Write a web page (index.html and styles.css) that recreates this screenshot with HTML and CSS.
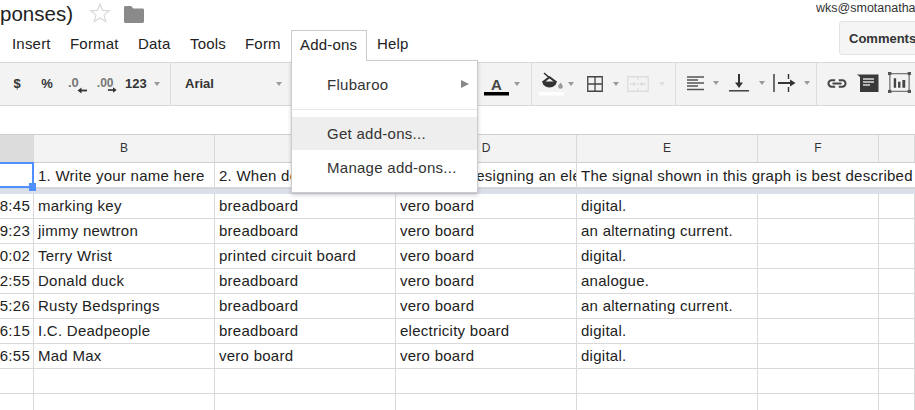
FILE: index.html
```html
<!DOCTYPE html>
<html lang="en">
<head>
<meta charset="utf-8">
<title>Responses</title>
<link rel="stylesheet" href="styles.css">
</head>
<body>
<div class="page">
  <header class="top">
    <div class="top-left">
      <div class="title-row">
        <div class="title"><span>(Form Responses)</span></div>
        <svg class="star" width="22" height="22" viewBox="0 0 22 22"><path d="M11 2l2.500 6.400 6.800.4-5.300 4.300 1.800 6.600L11 16l-5.800 3.700L7 13.100 1.700 8.800l6.800-.4z" fill="#fff" stroke="#d8d8d8" stroke-width="1.200"/></svg>
        <svg class="folder" width="20" height="17" viewBox="0 0 20 17"><path d="M0 1.500C0 .7.6 0 1.400 0h5.800l2 2.600h9.400c.8 0 1.400.6 1.400 1.400v11.600c0 .8-.6 1.400-1.400 1.400H1.400C.6 17 0 16.400 0 15.600z" fill="#8a8a8a"/></svg>
      </div>
      <nav class="menu">
        <span class="m m-insert">Insert</span>
        <span class="m m-format">Format</span>
        <span class="m m-data">Data</span>
        <span class="m m-tools">Tools</span>
        <span class="m m-form">Form</span>
        <span class="m m-addons">Add-ons</span>
        <span class="m m-help">Help</span>
      </nav>
    </div>
    <div class="top-right">
      <div class="email">wks@smotanatha.org</div>
      <div class="comments">Comments</div>
    </div>
  </header>

  <div class="toolbar">
    <div class="grp g1">
      <span class="t cell">$</span>
      <span class="t cell">%</span>
      <span class="cell"><svg width="22" height="24" viewBox="0 0 22 24"><text x="2" y="15" class="st">.0</text><path d="M14 18.500h7" stroke="#333" stroke-width="1.800"/><path d="M15.500 15.500l-4 3 4 3z" fill="#333"/></svg></span>
      <span class="cell"><svg width="26" height="24" viewBox="0 0 26 24"><text x="2" y="15" class="st">.00</text><path d="M14 18.500h6" stroke="#333" stroke-width="1.800"/><path d="M19.500 15.500l4 3-4 3z" fill="#333"/></svg></span>
      <span class="t num">123</span>
      <i class="caret c-num"></i>
    </div>
    <div class="grp g2">
      <span class="t font">Arial</span>
      <i class="caret c-font"></i>
      <svg class="tc" width="25" height="24" viewBox="0 0 25 24"><text x="12.500" y="18" text-anchor="middle" class="tca">A</text><rect x="0" y="20" width="25" height="3.500" fill="#000"/></svg>
      <i class="caret c-tc"></i>
    </div>
    <div class="grp g3">
      <svg class="fill" width="25" height="24" viewBox="0 0 25 24"><path d="M5 1l8 7" stroke="#333" stroke-width="1.600"/><path d="M3 9.500L10.500 4 18 9.500 16.500 13Q10.500 18 4.500 13z" fill="#333"/><path d="M6.500 9.500h8L10.500 6.500z" fill="#f3f3f3"/><path d="M21.500 10.500c1.200 1.800 2.300 2.800 2.300 4a2.300 2.300 0 0 1-4.600 0c0-1.200 1.100-2.200 2.300-4z" fill="#999"/><rect y="20" width="25" height="3.500" fill="#fff"/></svg>
      <i class="caret c-fill"></i>
      <svg class="borders" width="16" height="16" viewBox="0 0 16 16"><path d="M.75.75h14.500v14.500H.75zM8 .75v14.500M.75 8h14.500" fill="none" stroke="#444" stroke-width="1.300"/></svg>
      <i class="caret c-bord"></i>
      <svg class="merge" width="22" height="16" viewBox="0 0 22 16"><path d="M.75.75h20.500v14.500H.75zM11 1v3M11 6.500v3M11 12v3M3 8h6M13 8h6" fill="none" stroke="#ddd" stroke-width="1.300"/><path d="M6.500 5.500L9.500 8l-3 2.500zM15.500 5.500L12.500 8l3 2.500z" fill="#ddd"/></svg>
      <i class="caret c-merge"></i>
    </div>
    <div class="grp g4">
      <svg class="align" width="18" height="15" viewBox="0 0 18 15"><path d="M0 1h17M0 4h11M0 7h17M0 10h11M0 13.500h17" stroke="#555" stroke-width="1.400"/></svg>
      <i class="caret c-al"></i>
      <svg class="valign" width="20" height="18" viewBox="0 0 20 18"><path d="M0 16.800h20" stroke="#333" stroke-width="1.400"/><path d="M10 0v10" stroke="#333" stroke-width="2"/><path d="M6 8.500h8L10 14z" fill="#333"/></svg>
      <i class="caret c-va"></i>
      <svg class="wrap" width="23" height="18" viewBox="0 0 23 18"><path d="M1 0v18" stroke="#333" stroke-width="1.400"/><path d="M15.500 0v5M15.500 13v5" stroke="#333" stroke-width="1.400"/><path d="M5 9h13" stroke="#333" stroke-width="2"/><path d="M17 5.500L22.500 9 17 12.500z" fill="#333"/></svg>
      <i class="caret c-wr"></i>
    </div>
    <div class="grp g5">
      <svg class="link" width="22" height="9" viewBox="0 0 22 10"><path d="M9 1.500H5a3.500 3.500 0 0 0 0 7h4M13 1.500h4a3.500 3.500 0 0 1 0 7h-4M6 5h10" fill="none" stroke="#444" stroke-width="2.200"/></svg>
      <svg class="note" width="22" height="18" viewBox="0 0 22 18"><path d="M0 .5h21.500V18H3V3z" fill="#3a3a3a"/><path d="M6 5h11M6 8h11M6 11h7" stroke="#ddd" stroke-width="1.400"/></svg>
      <svg class="chart" width="23" height="21" viewBox="0 0 24 24" preserveAspectRatio="none"><rect x="2" y="2" width="20" height="20" fill="none" stroke="#444"/><path d="M6 18V7h2.500v11zM10.500 18v-7H13v7zM15 18v-9h3v9z" fill="#444"/><rect width="3.500" height="3.500" fill="#555"/><rect x="20.500" width="3.500" height="3.500" fill="#555"/><rect y="20.500" width="3.500" height="3.500" fill="#555"/><rect x="20.500" y="20.500" width="3.500" height="3.500" fill="#555"/></svg>
    </div>
  </div>

  <div class="formula"></div>

  <div class="sheet">
    <div class="row head">
      <div class="c sel"></div><div class="c">B</div><div class="c">C</div><div class="c">D</div><div class="c">E</div><div class="c">F</div><div class="c"></div>
    </div>
    <div class="row first">
      <div class="c ts"></div><div class="c">1. Write your name here</div><div class="c">2. When designing a circuit</div><div class="c"><span>3. Before designing an electronic circuit</span></div><div class="c wide">The signal shown in this graph is best described as</div>
    </div>
    <div class="frozen"></div>
    <div class="row"><div class="c ts"><span>18:45</span></div><div class="c">marking key</div><div class="c">breadboard</div><div class="c">vero board</div><div class="c">digital.</div><div class="c"></div><div class="c"></div></div>
    <div class="row"><div class="c ts"><span>19:23</span></div><div class="c">jimmy newtron</div><div class="c">breadboard</div><div class="c">vero board</div><div class="c">an alternating current.</div><div class="c"></div><div class="c"></div></div>
    <div class="row"><div class="c ts"><span>10:02</span></div><div class="c">Terry Wrist</div><div class="c">printed circuit board</div><div class="c">vero board</div><div class="c">digital.</div><div class="c"></div><div class="c"></div></div>
    <div class="row"><div class="c ts"><span>12:55</span></div><div class="c">Donald duck</div><div class="c">breadboard</div><div class="c">vero board</div><div class="c">analogue.</div><div class="c"></div><div class="c"></div></div>
    <div class="row"><div class="c ts"><span>15:26</span></div><div class="c">Rusty Bedsprings</div><div class="c">breadboard</div><div class="c">vero board</div><div class="c">an alternating current.</div><div class="c"></div><div class="c"></div></div>
    <div class="row"><div class="c ts"><span>16:15</span></div><div class="c">I.C. Deadpeople</div><div class="c">breadboard</div><div class="c">electricity board</div><div class="c">digital.</div><div class="c"></div><div class="c"></div></div>
    <div class="row"><div class="c ts"><span>16:55</span></div><div class="c">Mad Max</div><div class="c">vero board</div><div class="c">vero board</div><div class="c">digital.</div><div class="c"></div><div class="c"></div></div>
    <div class="row"><div class="c"></div><div class="c"></div><div class="c"></div><div class="c"></div><div class="c"></div><div class="c"></div><div class="c"></div></div>
    <div class="row"><div class="c"></div><div class="c"></div><div class="c"></div><div class="c"></div><div class="c"></div><div class="c"></div><div class="c"></div></div>
    <div class="selection"></div>
    <div class="handle"></div>
  </div>

  <div class="dropdown">
    <div class="di flub"><span>Flubaroo</span><i class="arrow"></i></div>
    <div class="sep"></div>
    <div class="di hover">Get add-ons...</div>
    <div class="di">Manage add-ons...</div>
  </div>
</div>
</body>
</html>
```

FILE: styles.css
```css
* { box-sizing: border-box; }
html, body { margin: 0; padding: 0; height: 100%; background: #fff; }
body { font-family: "Liberation Sans", Arial, sans-serif; color: #222; overflow: hidden; }
.page { position: relative; width: 915px; height: 410px; overflow: hidden; }

.top { display: flex; justify-content: space-between; height: 62px; }
.title-row { display: flex; align-items: center; height: 30px; }
.title { width: 73px; height: 30px; overflow: hidden; display: flex; justify-content: flex-end; font-size: 20.500px; line-height: 28px; white-space: nowrap; color: #222; flex: none; }
.star { margin-left: 16px; margin-top: -4px; }
.folder { margin-left: 13px; margin-top: -1px; }

.menu { display: flex; height: 31px; align-items: flex-start; font-size: 15px; line-height: 27px; color: #222; letter-spacing: .2px; padding-left: 12px; }
.m { flex: none; }
.m-insert { width: 58px; }
.m-format { width: 68px; }
.m-data { width: 52px; }
.m-tools { width: 55px; }
.m-form { width: 46px; }
.m-addons { width: 76px; height: 31px; padding-left: 8px; border: 1px solid #ccc; border-bottom: 0; background: #fff; position: relative; z-index: 3; }
.m-help { margin-left: 10px; }

.top-right { width: 99px; flex: none; overflow: hidden; }
.email { font-size: 12.500px; line-height: 16px; height: 21px; white-space: nowrap; color: #333; }
.comments { margin-left: 23px; width: 90px; height: 34px; background: #f5f5f5; border: 1px solid #e2e2e2; border-radius: 3px; font-size: 13px; font-weight: bold; line-height: 33px; padding-left: 9px; color: #333; white-space: nowrap; }

.toolbar { display: flex; height: 44px; background: #f3f3f3; border-top: 1px solid #d9d9d9; border-bottom: 1px solid #d9d9d9; }
.grp { display: flex; align-items: center; height: 42px; border-right: 1px solid #dcdcdc; flex: none; }
.g1 { width: 171px; padding-left: 5px; gap: 6px; }
.g2 { width: 361px; padding-left: 14px; }
.g3 { width: 144px; }
.g4 { width: 141px; padding-bottom: 2px; }
.g5 { flex: 1; border-right: 0; padding-bottom: 3px; }
.t { font-size: 13px; font-weight: bold; color: #333; margin-bottom: 2px; }
.cell { width: 24px; flex: none; text-align: center; display: flex; justify-content: center; }
.num { margin-left: 0; width: 22px; }
.font { width: 91px; }
.st { font: bold 13px "Liberation Sans", Arial, sans-serif; fill: #777; }
.tca { font: bold 15px "Liberation Sans", Arial, sans-serif; fill: #444; }
.caret { width: 0; height: 0; border: 3px solid transparent; border-top: 4px solid #999; border-bottom: 0; flex: none; }
.c-num { margin-left: 1px; }
.c-font { margin-left: 0; }
.tc { margin-left: 202px; }
.c-tc { margin-left: 5px; }
.fill { margin-left: 7px; }
.c-fill { margin-left: 4px; }
.borders { margin-left: 13px; }
.c-bord { margin-left: 10px; }
.merge { margin-left: 8px; }
.c-merge { margin-left: 10px; border-top-color: #ddd; }
.align { margin-left: 11px; }
.c-al { margin-left: 8px; }
.valign { margin-left: 10px; }
.c-va { margin-left: 10px; }
.wrap { margin-left: 8px; }
.c-wr { margin-left: 8px; }
.link { margin-left: 9px; margin-top: 1px; }
.note { margin-left: 9px; }
.chart { margin-left: 9px; }

.formula { height: 28px; background: #fff; }

.sheet { position: relative; border-top: 1px solid #cfcfcf; font-size: 15px; letter-spacing: .26px; color: #222; }
.row { display: grid; grid-template-columns: 34px 181px 181px 181px 181px 121px 36px; height: 25px; }
.c { border-right: 1px solid #d9d9d9; border-bottom: 1px solid #d9d9d9; padding-left: 4px; line-height: 23px; white-space: nowrap; overflow: hidden; }
.head { height: 28px; background: #f3f3f3; font-size: 12px; letter-spacing: 0; }
.head .c { text-align: center; padding-left: 0; line-height: 27px; color: #333; border-bottom-color: #cfcfcf; }
.head .sel { background: #dcdcdc; }
.first .c { line-height: 26px; }
.first .wide { grid-column: span 3; border-right: 0; }
.ts { padding-left: 0; display: flex; justify-content: flex-end; padding-right: 3px; }
.frozen { height: 6px; background: #dadfea; border-top: 1px solid #d0d4de; }
.selection { position: absolute; left: -3px; top: 27px; width: 37px; height: 26px; border: 2px solid #4d90fe; }
.handle { position: absolute; left: 29px; top: 48px; width: 7px; height: 8px; background: #4d90fe; }

.dropdown { position: absolute; left: 291px; top: 60px; width: 187px; height: 133px; background: #fff; border: 1px solid #ccc; box-shadow: 0 2px 4px rgba(0,0,0,.2); padding-top: 7px; font-size: 15px; color: #333; letter-spacing: .27px; z-index: 2; }
.di { height: 33.500px; padding-top: 1px; padding-left: 35px; display: flex; align-items: center; white-space: nowrap; }
.flub { justify-content: space-between; padding-right: 8px; padding-top: 0; padding-bottom: 1px; }
.arrow { width: 0; height: 0; border: 4px solid transparent; border-left: 8px solid #888; border-right: 0; }
.sep { height: 1px; background: #e8e8e8; margin: 7px 0 7px; }
.hover { background: #eee; }
```
